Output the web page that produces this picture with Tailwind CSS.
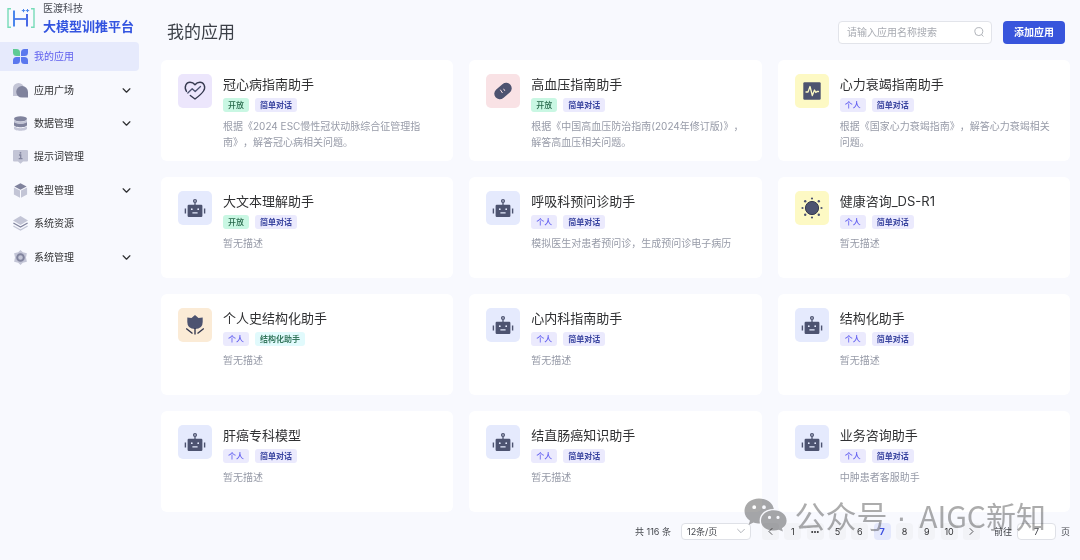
<!DOCTYPE html>
<html lang="zh-CN">
<head>
<meta charset="utf-8">
<meta name="viewport" content="width=device-width, initial-scale=1">
<title>我的应用</title>
<script src="https://cdn.jsdelivr.net/npm/@tailwindcss/browser@4"></script>
</head>
<body class="flex min-h-screen bg-[#f8f9fe] font-['Inter','Noto_Sans_CJK_SC',sans-serif] text-[10px] text-[#303133] [text-spacing-trim:space-all]">

<!-- Shared icons -->
<svg class="hidden" aria-hidden="true">
  <symbol id="robot" viewBox="0 0 34 34">
    <circle cx="17" cy="10" r="1.4" fill="none" stroke="#4d5370" stroke-width="1.3"/>
    <path d="M17 11.4V14.5" stroke="#4d5370" stroke-width="1.3"/>
    <path fill="#4d5370" fill-rule="evenodd" d="M10.8 13.8H23.2Q24.4 13.8 24.4 15V24.8Q24.4 26 23.2 26H10.8Q9.6 26 9.6 24.8V15Q9.6 13.8 10.8 13.8ZM13.800 17.300A.9 .9 0 1 0 13.800 19.100A.9 .9 0 1 0 13.800 17.300ZM20.200 17.300A.9 .9 0 1 0 20.200 19.100A.9 .9 0 1 0 20.200 17.300ZM14.4 21.2H19.6V22.4H14.4Z"/>
    <path d="M7.4 17.5V22.5M26.6 17.5V22.5" stroke="#4d5370" stroke-width="1.4"/>
  </symbol>
  <symbol id="chev" viewBox="0 0 8 8"><path d="M1 2.5L4 5.5L7 2.5" fill="none" stroke="currentColor" stroke-width="1.1" stroke-linecap="round" stroke-linejoin="round"/></symbol>
  <symbol id="thin" viewBox="0 0 8 8"><path d="M.6 2.300L4 5.700L7.400 2.300" fill="none" stroke="currentColor" stroke-width=".9" stroke-linecap="round" stroke-linejoin="round"/></symbol>
</svg>

<aside class="w-[139px] shrink-0">
  <div class="flex h-[42px] items-start gap-2 pl-[7px]">
    <svg class="mt-2 h-5 w-7 shrink-0" viewBox="0 0 28 20" fill="none" aria-hidden="true">
      <path d="M4 .8H1V19.2H4M24 .8H27V19.2H24" stroke="#77dcb8" stroke-width="1.4"/>
      <path d="M7 2.500V18.500" stroke="#4a86ec" stroke-width="2"/><path d="M20 6V18.500" stroke="#4968e6" stroke-width="2"/><path d="M7 11H20" stroke="#4a78ea" stroke-width="1.8"/>
      <path d="M14.8 2.600h3.400M16.500 1v3.200M18.800 2.600h3.400M20.500 1v3.200" stroke="#4a86ec" stroke-width="1"/>
    </svg>
    <div class="whitespace-nowrap">
      <p class="leading-[17px] text-[#4a4d55]">医渡科技</p>
      <p class="text-[13px] font-bold leading-[18px] text-[#3354e0]">大模型训推平台</p>
    </div>
  </div>
  <nav class="grid h-[230px] grid-rows-7 gap-1">
    <a href="#" class="flex items-center gap-[6px] rounded-r bg-[#e6eafc] pl-[13px] pr-2 text-[#5f60ee]">
      <svg class="size-[15px]" viewBox="0 0 15 15"><path fill="#5fcb95" d="M0 0H3.5Q7 0 7 3.5V7H3.5Q0 7 0 3.5Z"/><path fill="#5b78ee" d="M15 0H11.5Q8 0 8 3.5V7H11.5Q15 7 15 3.5ZM0 15H3.5Q7 15 7 11.5V8H3.5Q0 8 0 11.5ZM15 15H11.5Q8 15 8 11.5V8H11.5Q15 8 15 11.5Z"/></svg>
      <span>我的应用</span>
    </a>
    <a href="#" class="flex items-center gap-[6px] pl-[13px] pr-2">
      <svg class="size-[15px]" viewBox="0 0 15 15"><path fill="#c3c5d6" d="M0 13V5.5A5.5 5.5 0 0 1 11 5.5V13Z"/><path fill="#80839d" d="M9 3A6 6 0 0 1 15 9V14.6H9A5.8 5.8 0 1 1 9 3Z"/></svg>
      <span>应用广场</span><svg class="ml-auto size-[9px]"><use href="#chev"/></svg>
    </a>
    <a href="#" class="flex items-center gap-[6px] pl-[13px] pr-2">
      <svg class="size-[15px]" viewBox="0 0 15 15"><path fill="#c3c5d6" d="M1 10.5Q7.500 14 14 10.500V12.500C14 15.500 1 15.500 1 12.500Z"/><path fill="#80839d" d="M1 6Q7.500 9.500 14 6V9C14 12 1 12 1 9Z"/><path fill="#c3c5d6" d="M1 4Q7.500 8 14 4V5.500C14 8.700 1 8.700 1 5.500Z"/><ellipse cx="7.500" cy="2.800" rx="6.500" ry="2.600" fill="#80839d"/></svg>
      <span>数据管理</span><svg class="ml-auto size-[9px]"><use href="#chev"/></svg>
    </a>
    <a href="#" class="flex items-center gap-[6px] pl-[13px] pr-2">
      <svg class="size-[15px]" viewBox="0 0 15 15"><path fill="#c3c5d6" d="M1 1H14Q15 1 15 2V11.500Q15 12.500 14 12.500H10L7.500 14.800L5 12.500H1Q0 12.500 0 11.500V2Q0 1 1 1Z"/><path d="M6 6H7.700V9.500M5.700 9.600H9.500" fill="none" stroke="#80839d" stroke-width="1.300"/><circle cx="7.500" cy="3.800" r=".9" fill="#80839d"/></svg>
      <span>提示词管理</span>
    </a>
    <a href="#" class="flex items-center gap-[6px] pl-[13px] pr-2">
      <svg class="size-[15px]" viewBox="0 0 15 15"><path fill="#80839d" d="M7.500 .3L13.600 3.500L7.500 6.700L1.400 3.500Z"/><path fill="#c3c5d6" d="M.9 4.400L7 7.600V14.700L.9 11.500ZM14.100 4.400L8 7.600V14.700L14.100 11.500Z"/></svg>
      <span>模型管理</span><svg class="ml-auto size-[9px]"><use href="#chev"/></svg>
    </a>
    <a href="#" class="flex items-center gap-[6px] pl-[13px] pr-2">
      <svg class="size-[15px]" viewBox="0 0 15 15"><path fill="#c3c5d6" d="M7.500 0L15 4.500L7.500 9L0 4.500Z"/><path d="M.4 7L7.500 11L14.600 7" fill="none" stroke="#80839d" stroke-width="1.300"/><path d="M.4 10L7.500 14L14.600 10" fill="none" stroke="#c3c5d6" stroke-width="1.300"/></svg>
      <span>系统资源</span>
    </a>
    <a href="#" class="flex items-center gap-[6px] pl-[13px] pr-2">
      <svg class="size-[15px]" viewBox="0 0 15 15"><path fill="#c3c5d6" d="M7.500 0L9.800 2.200L13.900 3.200L13 7.500L13.900 11.800L9.800 12.800L7.500 15L5.200 12.800L1.100 11.800L2 7.500L1.100 3.200L5.200 2.200Z"/><circle cx="7.500" cy="7.500" r="3.300" fill="#c3c5d6" stroke="#80839d" stroke-width="2"/></svg>
      <span>系统管理</span><svg class="ml-auto size-[9px]"><use href="#chev"/></svg>
    </a>
  </nav>
</aside>

<main class="relative min-w-0 flex-1 pl-[22px] pr-[10px]">
  <header class="flex h-[60px] items-center pl-[6px] pr-[5px] pt-1">
    <h1 class="pt-px text-[17px] text-[#3c4048]">我的应用</h1>
    <label class="ml-auto flex h-[23px] w-[154px] items-center rounded border border-[#e2e4ea] bg-white pl-2 pr-[7px]">
      <input type="search" aria-label="搜索应用" placeholder="请输入应用名称搜索" class="min-w-0 flex-1 bg-transparent text-[10px] outline-none placeholder:text-[#a8abb2]">
      <svg class="size-[10px]" viewBox="0 0 10 10" fill="none" stroke="#a8abb2" stroke-width=".9"><circle cx="4.800" cy="4.600" r="4"/><path d="M7.600 7.600L9.400 9.500"/></svg>
    </label>
    <button class="ml-[11px] h-[23px] w-[62px] rounded bg-[#3855dc] font-bold text-white">添加应用</button>
  </header>

  <section class="grid grid-cols-3 gap-4">
    <article class="flex h-[101px] gap-[11px] rounded-md bg-white px-[17px] pt-[14px]">
      <svg class="size-[34px] shrink-0 rounded-[5px] bg-[#ece6fc]" viewBox="0 0 34 34" fill="none" stroke="#363a50" stroke-width="1.400" stroke-linecap="round" stroke-linejoin="round"><path d="M8.500 17.500C5.500 12.500 8.500 8.300 12 8.300C14.500 8.300 16 9.500 17 10.800C18 9.500 19.500 8.300 22 8.300C25.500 8.300 28.300 12.500 25.500 17C23.500 20.200 19.500 23.200 17 25L12.300 21.500"/><path d="M9.800 19L14.200 14.700L17.200 17.500L22.500 12.500" stroke="#4d5370" stroke-width="1.300"/></svg>
      <div class="min-w-0 flex-1">
        <h2 class="text-[13px] leading-5">冠心病指南助手</h2>
        <div class="mt-1 flex gap-[6px] text-[8px] font-medium leading-[14px]"><span class="rounded-[3px] bg-[#c9f7e3] px-[5px] text-[#27694b]">开放</span><span class="rounded-[3px] bg-[#ebeafd] px-[5px] font-bold text-[#3a45a0]">简单对话</span></div>
        <p class="mt-[6px] leading-4 text-[#979ba8]">根据《2024 ESC慢性冠状动脉综合征管理指南》，解答冠心病相关问题。</p>
      </div>
    </article>
    <article class="flex h-[101px] gap-[11px] rounded-md bg-white px-[17px] pt-[14px]">
      <svg class="size-[34px] shrink-0 rounded-[5px] bg-[#f9e2e5]" viewBox="0 0 34 34"><g transform="rotate(-40 17 17)"><rect x="7.300" y="11.500" width="19.400" height="11" rx="5.500" fill="#4d5370"/></g><path d="M14.300 15.700L16.500 19M17.600 14.800L18.800 16.800" stroke="#f9e2e5" stroke-width="1"/></svg>
      <div class="min-w-0 flex-1">
        <h2 class="text-[13px] leading-5">高血压指南助手</h2>
        <div class="mt-1 flex gap-[6px] text-[8px] font-medium leading-[14px]"><span class="rounded-[3px] bg-[#c9f7e3] px-[5px] text-[#27694b]">开放</span><span class="rounded-[3px] bg-[#ebeafd] px-[5px] font-bold text-[#3a45a0]">简单对话</span></div>
        <p class="mt-[6px] leading-4 text-[#979ba8]">根据《中国高血压防治指南(2024年修订版)》，解答高血压相关问题。</p>
      </div>
    </article>
    <article class="flex h-[101px] gap-[11px] rounded-md bg-white px-[17px] pt-[14px]">
      <svg class="size-[34px] shrink-0 rounded-[5px] bg-[#fdf9c4]" viewBox="0 0 34 34"><rect x="8.300" y="8.300" width="17.400" height="17.400" rx="1.200" fill="#4d5370"/><path d="M11 18H13L15 12.500L17.300 21.500L19.500 16L20.800 18.500L22 17.500H23.500" fill="none" stroke="#fdf9c4" stroke-width="1.300" stroke-linejoin="round" stroke-linecap="round"/></svg>
      <div class="min-w-0 flex-1">
        <h2 class="text-[13px] leading-5">心力衰竭指南助手</h2>
        <div class="mt-1 flex gap-[6px] text-[8px] font-medium leading-[14px]"><span class="rounded-[3px] bg-[#ebeafd] px-[5px] text-[#5f5cf0]">个人</span><span class="rounded-[3px] bg-[#ebeafd] px-[5px] font-bold text-[#3a45a0]">简单对话</span></div>
        <p class="mt-[6px] leading-4 text-[#979ba8]">根据《国家心力衰竭指南》，解答心力衰竭相关问题。</p>
      </div>
    </article>

    <article class="flex h-[101px] gap-[11px] rounded-md bg-white px-[17px] pt-[14px]">
      <svg class="size-[34px] shrink-0 rounded-[5px] bg-[#e5eafd]"><use href="#robot"/></svg>
      <div class="min-w-0 flex-1">
        <h2 class="text-[13px] leading-5">大文本理解助手</h2>
        <div class="mt-1 flex gap-[6px] text-[8px] font-medium leading-[14px]"><span class="rounded-[3px] bg-[#c9f7e3] px-[5px] text-[#27694b]">开放</span><span class="rounded-[3px] bg-[#ebeafd] px-[5px] font-bold text-[#3a45a0]">简单对话</span></div>
        <p class="mt-[6px] leading-4 text-[#979ba8]">暂无描述</p>
      </div>
    </article>
    <article class="flex h-[101px] gap-[11px] rounded-md bg-white px-[17px] pt-[14px]">
      <svg class="size-[34px] shrink-0 rounded-[5px] bg-[#e5eafd]"><use href="#robot"/></svg>
      <div class="min-w-0 flex-1">
        <h2 class="text-[13px] leading-5">呼吸科预问诊助手</h2>
        <div class="mt-1 flex gap-[6px] text-[8px] font-medium leading-[14px]"><span class="rounded-[3px] bg-[#ebeafd] px-[5px] text-[#5f5cf0]">个人</span><span class="rounded-[3px] bg-[#ebeafd] px-[5px] font-bold text-[#3a45a0]">简单对话</span></div>
        <p class="mt-[6px] leading-4 text-[#979ba8]">模拟医生对患者预问诊，生成预问诊电子病历</p>
      </div>
    </article>
    <article class="flex h-[101px] gap-[11px] rounded-md bg-white px-[17px] pt-[14px]">
      <svg class="size-[34px] shrink-0 rounded-[5px] bg-[#fdf9c4]" viewBox="0 0 34 34"><circle cx="17" cy="17" r="6.600" fill="#4d5370" stroke="#363a50" stroke-width="1"/><g fill="#4d5370"><circle cx="17" cy="7.500" r="1.100"/><circle cx="17" cy="26.500" r="1.100"/><circle cx="7.500" cy="17" r="1.100"/><circle cx="26.500" cy="17" r="1.100"/><circle cx="10.200" cy="10.200" r="1.200"/><circle cx="23.800" cy="10.200" r="1.200"/><circle cx="10.200" cy="23.800" r="1.200"/><circle cx="23.800" cy="23.800" r="1.200"/></g></svg>
      <div class="min-w-0 flex-1">
        <h2 class="text-[13px] leading-5">健康咨询_DS-R1</h2>
        <div class="mt-1 flex gap-[6px] text-[8px] font-medium leading-[14px]"><span class="rounded-[3px] bg-[#ebeafd] px-[5px] text-[#5f5cf0]">个人</span><span class="rounded-[3px] bg-[#ebeafd] px-[5px] font-bold text-[#3a45a0]">简单对话</span></div>
        <p class="mt-[6px] leading-4 text-[#979ba8]">暂无描述</p>
      </div>
    </article>

    <article class="flex h-[101px] gap-[11px] rounded-md bg-white px-[17px] pt-[14px]">
      <svg class="size-[34px] shrink-0 rounded-[5px] bg-[#fbebd6]" viewBox="0 0 34 34"><path fill="#4d5370" d="M9.300 9.500L13.500 10L17 7L20.500 10L24.700 9.500V14Q24.700 21 17 21Q9.300 21 9.300 14Z"/><path d="M17 20V26.500M8.200 20.500L14.500 25.500M25.800 20.500L19.500 25.500" stroke="#363a50" stroke-width="1.400"/></svg>
      <div class="min-w-0 flex-1">
        <h2 class="text-[13px] leading-5">个人史结构化助手</h2>
        <div class="mt-1 flex gap-[6px] text-[8px] font-medium leading-[14px]"><span class="rounded-[3px] bg-[#ebeafd] px-[5px] text-[#5f5cf0]">个人</span><span class="rounded-[3px] bg-[#e1fafc] px-[5px] font-bold text-[#37785f]">结构化助手</span></div>
        <p class="mt-[6px] leading-4 text-[#979ba8]">暂无描述</p>
      </div>
    </article>
    <article class="flex h-[101px] gap-[11px] rounded-md bg-white px-[17px] pt-[14px]">
      <svg class="size-[34px] shrink-0 rounded-[5px] bg-[#e5eafd]"><use href="#robot"/></svg>
      <div class="min-w-0 flex-1">
        <h2 class="text-[13px] leading-5">心内科指南助手</h2>
        <div class="mt-1 flex gap-[6px] text-[8px] font-medium leading-[14px]"><span class="rounded-[3px] bg-[#ebeafd] px-[5px] text-[#5f5cf0]">个人</span><span class="rounded-[3px] bg-[#ebeafd] px-[5px] font-bold text-[#3a45a0]">简单对话</span></div>
        <p class="mt-[6px] leading-4 text-[#979ba8]">暂无描述</p>
      </div>
    </article>
    <article class="flex h-[101px] gap-[11px] rounded-md bg-white px-[17px] pt-[14px]">
      <svg class="size-[34px] shrink-0 rounded-[5px] bg-[#e5eafd]"><use href="#robot"/></svg>
      <div class="min-w-0 flex-1">
        <h2 class="text-[13px] leading-5">结构化助手</h2>
        <div class="mt-1 flex gap-[6px] text-[8px] font-medium leading-[14px]"><span class="rounded-[3px] bg-[#ebeafd] px-[5px] text-[#5f5cf0]">个人</span><span class="rounded-[3px] bg-[#ebeafd] px-[5px] font-bold text-[#3a45a0]">简单对话</span></div>
        <p class="mt-[6px] leading-4 text-[#979ba8]">暂无描述</p>
      </div>
    </article>

    <article class="flex h-[101px] gap-[11px] rounded-md bg-white px-[17px] pt-[14px]">
      <svg class="size-[34px] shrink-0 rounded-[5px] bg-[#e5eafd]"><use href="#robot"/></svg>
      <div class="min-w-0 flex-1">
        <h2 class="text-[13px] leading-5">肝癌专科模型</h2>
        <div class="mt-1 flex gap-[6px] text-[8px] font-medium leading-[14px]"><span class="rounded-[3px] bg-[#ebeafd] px-[5px] text-[#5f5cf0]">个人</span><span class="rounded-[3px] bg-[#ebeafd] px-[5px] font-bold text-[#3a45a0]">简单对话</span></div>
        <p class="mt-[6px] leading-4 text-[#979ba8]">暂无描述</p>
      </div>
    </article>
    <article class="flex h-[101px] gap-[11px] rounded-md bg-white px-[17px] pt-[14px]">
      <svg class="size-[34px] shrink-0 rounded-[5px] bg-[#e5eafd]"><use href="#robot"/></svg>
      <div class="min-w-0 flex-1">
        <h2 class="text-[13px] leading-5">结直肠癌知识助手</h2>
        <div class="mt-1 flex gap-[6px] text-[8px] font-medium leading-[14px]"><span class="rounded-[3px] bg-[#ebeafd] px-[5px] text-[#5f5cf0]">个人</span><span class="rounded-[3px] bg-[#ebeafd] px-[5px] font-bold text-[#3a45a0]">简单对话</span></div>
        <p class="mt-[6px] leading-4 text-[#979ba8]">暂无描述</p>
      </div>
    </article>
    <article class="flex h-[101px] gap-[11px] rounded-md bg-white px-[17px] pt-[14px]">
      <svg class="size-[34px] shrink-0 rounded-[5px] bg-[#e5eafd]"><use href="#robot"/></svg>
      <div class="min-w-0 flex-1">
        <h2 class="text-[13px] leading-5">业务咨询助手</h2>
        <div class="mt-1 flex gap-[6px] text-[8px] font-medium leading-[14px]"><span class="rounded-[3px] bg-[#ebeafd] px-[5px] text-[#5f5cf0]">个人</span><span class="rounded-[3px] bg-[#ebeafd] px-[5px] font-bold text-[#3a45a0]">简单对话</span></div>
        <p class="mt-[6px] leading-4 text-[#979ba8]">中肿患者客服助手</p>
      </div>
    </article>
  </section>

  <nav class="mt-[11px] flex h-[17px] items-center justify-end text-[9px] text-[#44474d]" aria-label="分页">
    <span>共 116 条</span>
    <span class="relative ml-[10px] h-[17px] w-[70px]">
      <select aria-label="每页条数" class="block h-full w-full appearance-none rounded border border-[#dfe1e7] bg-white pl-[5px] text-[9px]"><option>12条/页</option></select>
      <svg class="pointer-events-none absolute right-[6px] top-1 size-2 text-[#a8abb2]"><use href="#thin"/></svg>
    </span>
    <div class="ml-[11px] flex w-[218px] justify-between text-[#303133]">
      <button aria-label="上一页" class="grid size-[17px] place-items-center rounded-[3px] bg-[#f2f3f7]"><svg class="size-[7px] rotate-90"><use href="#thin"/></svg></button>
      <button class="size-[17px] rounded bg-[#f2f3f7]">1</button>
      <button aria-label="更多" class="grid size-[17px] place-items-center rounded bg-[#f2f3f7]"><svg class="size-2" viewBox="0 0 8 8" fill="#303133"><circle cx="1.200" cy="4" r="1"/><circle cx="4" cy="4" r="1"/><circle cx="6.800" cy="4" r="1"/></svg></button>
      <button class="size-[17px] rounded bg-[#f2f3f7]">5</button>
      <button class="size-[17px] rounded bg-[#f2f3f7]">6</button>
      <button aria-current="page" class="size-[17px] rounded bg-[#e4e8fc] font-bold text-[#3d4fe0]">7</button>
      <button class="size-[17px] rounded bg-[#f2f3f7]">8</button>
      <button class="size-[17px] rounded bg-[#f2f3f7]">9</button>
      <button class="size-[17px] rounded bg-[#f2f3f7]">10</button>
      <button aria-label="下一页" class="grid size-[17px] place-items-center rounded-[3px] bg-[#f2f3f7]"><svg class="size-[7px] -rotate-90"><use href="#thin"/></svg></button>
    </div>
    <label for="goto" class="ml-[14px]">前往</label>
    <input id="goto" value="7" class="mx-[5px] h-[17px] w-[39px] rounded border border-[#dfe1e7] bg-white text-center text-[9px]">
    <span>页</span>
  </nav>

  <!-- Watermark over the page's lower right corner -->
  <div class="pointer-events-none absolute right-[34px] top-[497px] flex items-start gap-2 whitespace-nowrap font-['Noto_Sans_CJK_SC',sans-serif] text-[31px] leading-[36px] text-[#808080]/65 mix-blend-multiply">
    <svg class="h-[35px] w-[43px]" viewBox="0 0 43 34"><g fill="#a9a9a9" fill-rule="evenodd"><path d="M15 1C6.500 1 .5 6.500 .5 13.500C.5 17.500 2.500 21 6 23.200L4.500 27.500L9.500 25C11.500 25.700 13.500 26 16 26C14 18 20 11.500 29.800 11.500C29 5.500 23 1 15 1ZM10.200 7.800A1.900 1.900 0 1 0 10.200 11.600A1.900 1.900 0 1 0 10.200 7.800ZM20 7.800A1.900 1.900 0 1 0 20 11.600A1.900 1.900 0 1 0 20 7.800Z"/><path d="M29.800 12.800C22.500 12.800 17 17.300 17 23.200C17 29 22.500 33 29.800 33C31.500 33 33.200 32.700 34.700 32.200L39 34L37.900 30.700C41 28.800 42.600 26.200 42.600 23.200C42.600 17.300 37 12.800 29.800 12.800ZM25.500 18.300A1.600 1.600 0 1 0 25.500 21.500A1.600 1.600 0 1 0 25.500 18.300ZM34 18.300A1.600 1.600 0 1 0 34 21.500A1.600 1.600 0 1 0 34 18.300Z"/></g></svg>
    <span>公众号<span class="font-['Liberation_Sans',sans-serif]"> · </span><span class="ml-1 text-[30px]">AIGC新知</span></span>
  </div>
</main>
</body>
</html>
